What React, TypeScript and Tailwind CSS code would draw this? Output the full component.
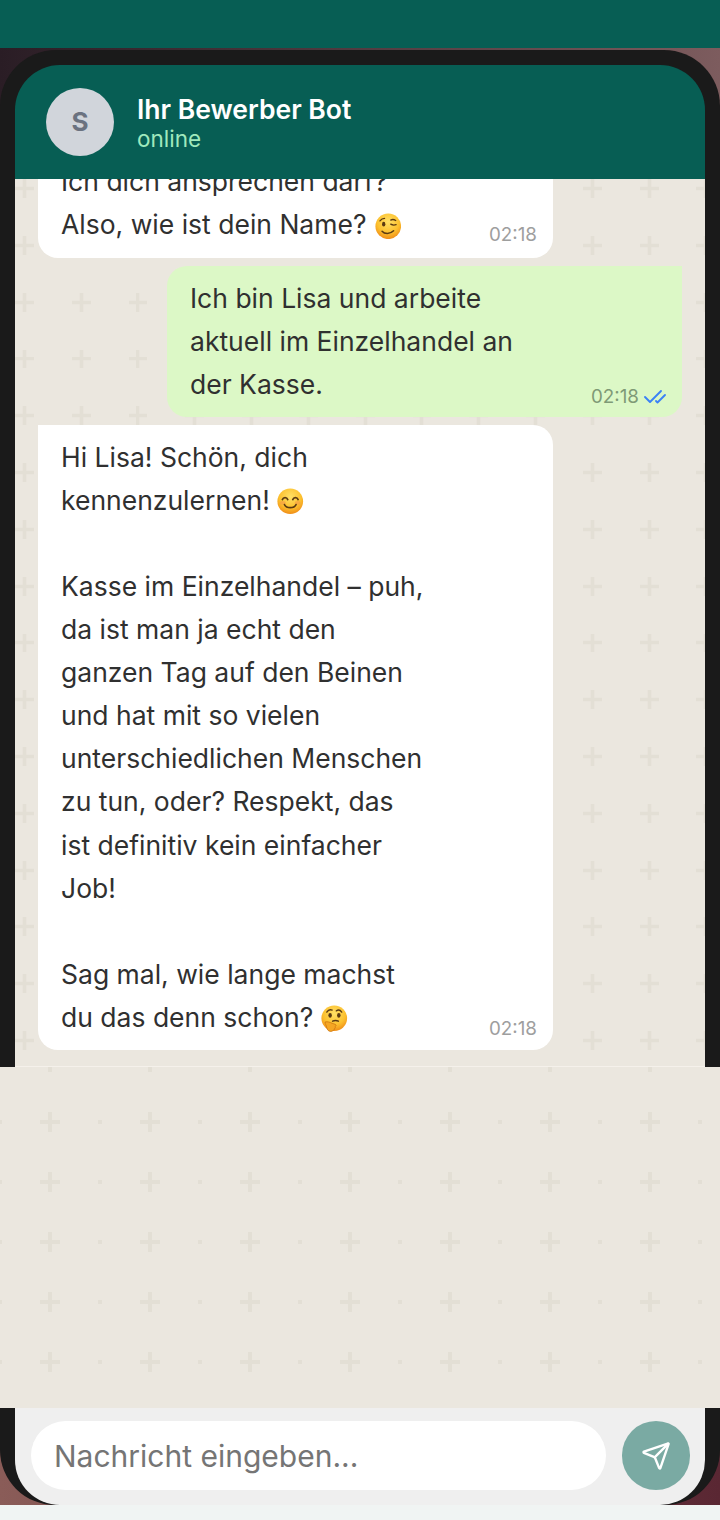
import { CheckCheck, Send } from 'lucide-react'
import type { ReactNode } from 'react'

const FONT = "font-['Inter','Noto_Sans',sans-serif]"

function EmojiFace({ id, className, children }: { id: string; className: string; children: ReactNode }) {
  return (
    <svg viewBox="0 0 32 32" className={`inline-block h-[26.5px] w-[26.5px] align-[-5px] ${className}`}>
      <defs>
        <radialGradient id={id} cx="50%" cy="32%" r="72%">
          <stop offset="0%" stopColor="#ffe066" />
          <stop offset="60%" stopColor="#fcc02e" />
          <stop offset="100%" stopColor="#ee8514" />
        </radialGradient>
      </defs>
      <circle cx="16" cy="16" r="15.5" fill={`url(#${id})`} />
      {children}
    </svg>
  )
}

function WinkEmoji() {
  return (
    <EmojiFace id="wink" className="ml-[8.5px]">
      <g fill="none" stroke="#5b3a12" strokeWidth="1.6" strokeLinecap="round">
        <path d="M6 9.5c1.5-2 3.5-3 5.5-3" />
        <path d="M19 8.5c2-1 4-.8 6 .5" />
        <path d="M19 13.5c2 1.2 4 1.4 6.5.6" />
        <path d="M8.5 22c3 3.6 9.5 4 14-.5" strokeWidth="1.8" />
      </g>
      <ellipse cx="10.5" cy="13.5" rx="2" ry="2.8" fill="#5b3a12" />
    </EmojiFace>
  )
}

function SmileEmoji() {
  return (
    <EmojiFace id="smile" className="ml-[7.5px]">
      <ellipse cx="7" cy="18" rx="3.5" ry="2.2" fill="#f59a4a" opacity="0.6" />
      <ellipse cx="25" cy="18" rx="3.5" ry="2.2" fill="#f59a4a" opacity="0.6" />
      <g fill="none" stroke="#5b3a12" strokeWidth="2" strokeLinecap="round">
        <path d="M6.5 14c1.2-3.2 5.3-3.2 6.5 0" />
        <path d="M19 14c1.2-3.2 5.3-3.2 6.5 0" />
        <path d="M9 20c2.5 5 11.5 5 14 0" />
      </g>
    </EmojiFace>
  )
}

function ThinkingEmoji() {
  return (
    <EmojiFace id="think" className="ml-[8px]">
      <g fill="none" stroke="#5b3a12" strokeWidth="1.7" strokeLinecap="round">
        <path d="M7 8.5c1.5-2.4 4-3.4 6.5-2.4" />
        <path d="M18.5 7c2.4-1.4 5-.6 6.5 1.6" />
        <path d="M14 19.5c2.4-1.2 4.6-1.2 7 0" />
      </g>
      <ellipse cx="11" cy="12.5" rx="2.1" ry="2.8" fill="#5b3a12" />
      <ellipse cx="21.5" cy="12.5" rx="2.1" ry="2.8" fill="#5b3a12" />
      <path
        d="M5 20.5c3-.8 6 .4 8.5 1.6l4 1.4c1.2.5 1 2-.2 2.2-.4.1-.4.4-.2.8.5 1-.2 2-1 2.2.2 1.2-.7 2-1.6 2-.8 1.2-3.4 1.6-5 .6-1.8-1-2.4-3-2.8-5-.3-1.6-2-3.6-1.7-5.8z"
        fill="#f5a623"
        stroke="#c9720f"
        strokeWidth="0.9"
      />
    </EmojiFace>
  )
}

function Time({ className }: { className: string }) {
  return <span className={`text-[18.8px] leading-none ${className}`}>02:18</span>
}

export default function App() {
  return (
    <div className={`flex h-[1520px] w-[720px] flex-col overflow-hidden bg-[#f0f4f3] ${FONT}`}>
      <div className="h-12 shrink-0 bg-[#075e54]" />

      <div className="bg-gradient-to-r from-[#2a1d25] to-[#7d5c5e] pt-[2px]">
        <div className="rounded-t-[56px] bg-[#1a1a1a] px-[15px] pt-[15px]">
          <header className="flex h-[114px] items-center gap-[23px] rounded-t-[45px] bg-[#075e54] pl-[31px]">
            <div className="flex h-[68px] w-[68px] items-center justify-center rounded-full bg-[#d1d5db] pb-[1px] text-[26px] font-bold text-[#6b7280]">
              S
            </div>
            <div className="pt-[2px]">
              <div className="text-[26.5px] leading-[32px] font-semibold text-white">Ihr Bewerber Bot</div>
              <div className="text-[22.5px] leading-[28px] text-[#a0e9bd]">online</div>
            </div>
          </header>

          <main className="flex h-[888px] flex-col justify-end gap-[7.5px] overflow-hidden border-b border-[#f5f1eb] bg-[#ebe7df] bg-[url('data:image/svg+xml,%3Csvg%20xmlns=%22http://www.w3.org/2000/svg%22%20width=%2256.8%22%20height=%2256.8%22%3E%3Cpath%20fill=%22%23e3dfd5%22%20d=%22M18.9%2026.6h19v3.6h-19zM26.6%2018.9h3.6v19h-3.6z%22/%3E%3C/svg%3E')] bg-[position:-19px_38px] bg-[size:56.8px_56.8px] px-[23px] pb-[16px] text-[26.5px] leading-[43.1px] text-[#303030]">
            <div className="relative w-[515px] shrink-0 rounded-[20px] bg-white pt-[10px] pr-[23px] pb-[12px] pl-[23px]">
              <p>
                Ich dich ansprechen darf?
                <br />
                Also, wie ist dein Name?
                <WinkEmoji />
              </p>
              <div className="absolute right-[16px] bottom-[5px]">
                <Time className="text-[#9e9e9e]" />
              </div>
            </div>

            <div className="relative w-[515px] shrink-0 self-end rounded-[20px] rounded-tr-none bg-[#dcf8c6] pt-[11px] pr-[23px] pb-[11px] pl-[23px]">
              <p>
                Ich bin Lisa und arbeite
                <br />
                aktuell im Einzelhandel an
                <br />
                der Kasse.
              </p>
              <div className="absolute right-[15px] bottom-[8px] flex items-center gap-[4px]">
                <Time className="text-[#7f9a76]" />
                <CheckCheck size={24} strokeWidth={1.9} className="text-[#3b82f6]" />
              </div>
            </div>

            <div className="relative w-[515px] shrink-0 rounded-[20px] rounded-tl-none bg-white pt-[11px] pr-[23px] pb-[11px] pl-[23px]">
              <p>
                Hi Lisa! Schön, dich
                <br />
                kennenzulernen!
                <SmileEmoji />
                <br />
                <br />
                Kasse im Einzelhandel – puh,
                <br />
                da ist man ja echt den
                <br />
                ganzen Tag auf den Beinen
                <br />
                und hat mit so vielen
                <br />
                unterschiedlichen Menschen
                <br />
                zu tun, oder? Respekt, das
                <br />
                ist definitiv kein einfacher
                <br />
                Job!
                <br />
                <br />
                Sag mal, wie lange machst
                <br />
                du das denn schon?
                <ThinkingEmoji />
              </p>
              <div className="absolute right-[16px] bottom-[3px]">
                <Time className="text-[#9e9e9e]" />
              </div>
            </div>
          </main>
        </div>
      </div>

      <section className="h-[341px] shrink-0 bg-[#ebe7df] bg-[url('data:image/svg+xml,%3Csvg%20xmlns=%22http://www.w3.org/2000/svg%22%20width=%22100%22%20height=%2260%22%3E%3Cpath%20fill=%22%23e3dfd5%22%20d=%22M40%2028h20v4H40zM48%2020h4v20h-4zM98%2028h4v4h-4zM-2%2028h4v4h-4z%22/%3E%3C/svg%3E')] bg-[position:0px_25px] bg-[size:100px_60px]" />

      <div className="h-[97px] shrink-0 overflow-hidden bg-gradient-to-r from-[#8a5c58] to-[#5a2733]">
        <div className="h-full rounded-b-[55px] bg-[#1a1a1a] px-[15px]">
          <form className="flex h-full gap-4 rounded-b-[45px] bg-[#efefef] pt-[13px] pr-[15px] pl-4">
            <input
              placeholder="Nachricht eingeben..."
              className="h-[69px] min-w-0 flex-1 rounded-full bg-white pl-[23px] text-[30px] outline-none placeholder:text-[#757575]"
            />
            <button
              type="button"
              className="flex h-[69px] w-[68px] shrink-0 items-center justify-center rounded-full bg-[#7aaaa3] text-white"
            >
              <Send size={30} strokeWidth={1.9} />
            </button>
          </form>
        </div>
      </div>
    </div>
  )
}
